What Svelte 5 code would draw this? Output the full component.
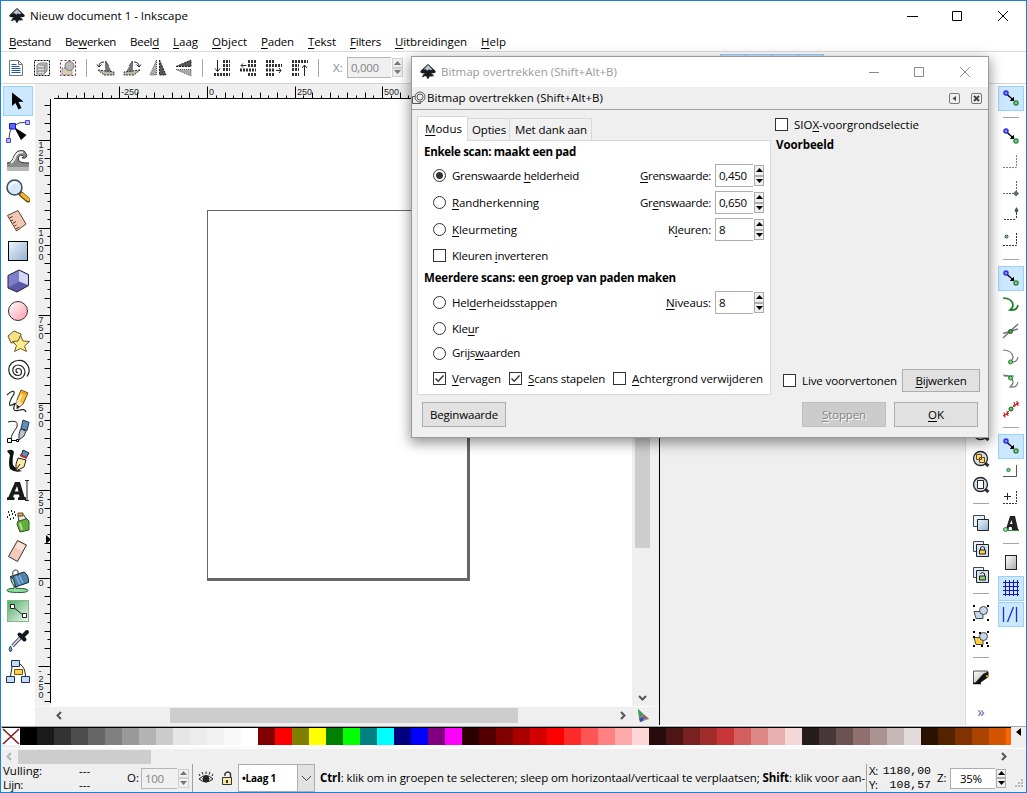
<script>
  function fit(node, width) {
    const natural = node.getBoundingClientRect().width;
    const count = node.textContent.length;
    node.style.letterSpacing = (width - natural) / count + 'px';
  }

  const menus = [
    ['', 'B', 'estand', 42], ['Be', 'w', 'erken', 51], ['Beel', 'd', '', 29], ['', 'L', 'aag', 25],
    ['', 'O', 'bject', 35], ['', 'P', 'aden', 33], ['', 'T', 'ekst', 28], ['', 'F', 'ilters', 31],
    ['', 'U', 'itbreidingen', 72], ['', 'H', 'elp', 25]
  ];
  const toolbar = ['doc', 'layers', 'deselect', '|', 'rotl', 'rotr', 'fliph', 'flipv', '|', 'bottom', 'lower', 'raise', 'top', '|'];
  const tools = ['arrow', 'node', 'tweak', 'zoom', 'measure', 'rect', 'box', 'circle', 'star', 'spiral',
    'pencil', 'pen', 'calli', 'text', 'spray', 'eraser', 'bucket', 'gradient', 'dropper', 'connector'];
  const snaps = [
    ['snap', 98, 1], ['|', 117], ['snap', 136], ['bbox', 162], ['bbox2', 188], ['bbox3', 214], ['bbox4', 240], ['|', 259],
    ['snap', 278, 1], ['path', 305], ['cross', 331], ['cusp', 357], ['smooth', 382], ['mid', 409], ['|', 427],
    ['snap', 446, 1], ['center', 471], ['plus', 498], ['textbase', 524], ['|', 543],
    ['page', 562], ['grid', 588, 1], ['guides', 614, 1]
  ];
  const commands = [
    ['zoompage', 433], ['zoomdraw', 459], ['zoomsheet', 485], ['|', 503], ['dup', 523], ['clone', 549], ['unclone', 575], ['|', 593],
    ['group', 613], ['ungroup', 639], ['|', 657], ['fill', 677]
  ];
  const gap = (list, i, start) => {
    const half = (e) => (e[0] === '|' ? 0.5 : 12.5);
    const top = list[i][1] - half(list[i]);
    return i ? top - (list[i - 1][1] + half(list[i - 1])) : top - start;
  };
  const colors = ('000000 1a1a1a 333333 4d4d4d 666666 808080 999999 b3b3b3 cccccc e6e6e6 ececec f2f2f2 f9f9f9 ffffff ' +
    '800000 ff0000 808000 ffff00 008000 00ff00 008080 00ffff 000080 0000ff 800080 ff00ff ' +
    '2b0000 550000 800000 aa0000 d40000 ff0000 ff2a2a ff5555 ff8080 ffaaaa ffd5d5 ' +
    '280b0b 501616 782121 a02c2c c83737 d35f5f de8787 e9afaf f4d7d7 ' +
    '241c1c 483737 6c5353 916f6f ac9393 c8b7b7 e3dbdb 2b1100 552200 803300 aa4400 d45500 ff6600').split(' ');

  const step = 8.757;
  const hTicks = Array.from({ length: 42 }, (_, k) => k - 17).map((k) => ({ k, x: Math.round(207 - 35 + k * step) }));
  const vTicks = Array.from({ length: 69 }, (_, k) => k - 14).map((k) => ({ k, y: Math.round(578 - 84 - k * step) }))
    .filter((t) => t.y > 17 && t.y < 619);
  const len = (k) => (k % 10 === 0 ? 12 : k % 2 === 0 ? 6 : 3);
</script>

{#snippet logo()}
  <svg class="logo" width="18" height="18" viewBox="0 0 18 18">
    <path d="M9 1 L16.5 8 Q17.5 9.6 15.5 10 L12 10.6 L14.5 11.8 L13 13.2 L10.6 13.4 L9.5 15.8 L8 15.6 L7.6 13.6 L4 13 L3.6 11.8 L6 10.8 L2.5 10 Q.5 9.6 1.5 8Z" fill="#17191c" />
    <path d="M9 2 L13.4 6.4 L11.4 7.3 L10 6.3 L8.4 7.8 L6.6 6.3 L4.6 6.6Z" fill="#b9c7d6" />
    <path d="M12 12.8h3M3 13.6h2" stroke="#333" />
  </svg>
{/snippet}

{#snippet spin(off)}
  <span class="spin" class:off>
    <i><svg width="7" height="4"><path d="M3.5 0L7 4H0Z" /></svg></i>
    <i><svg width="7" height="4"><path d="M0 0H7L3.5 4Z" /></svg></i>
  </span>
{/snippet}

{#snippet lines(d)}
  <path {d} stroke="#333" stroke-width="3" stroke-dasharray="2 1" fill="none" />
{/snippet}

{#snippet magnifier()}
  <path d="M16 16L19.500 19" stroke="#333" stroke-width="3" />
  <circle cx="11.5" cy="11.5" r="7" fill="#cfe0f2" stroke="#222" stroke-width="1.3" />
{/snippet}

{#snippet icon(n)}
  <svg class="ic" width="24" height="24" viewBox="0 0 24 24" fill="none" stroke-width="1">
    {#if n === 'doc'}
      <path d="M5.5 4.5h9l4 4v11h-13z" fill="#fff" stroke="#777" /><path d="M14.5 4.5v4h4" stroke="#777" />
      <path d="M7.5 8.5h5M7.5 10.5h8M7.5 12.5h9M7.5 14.5h9M7.5 16.5h9" stroke="#1e57a8" stroke-width="1.2" />
    {:else if n === 'layers'}
      <rect x="4.500" y="4.500" width="15" height="15" stroke="#000" stroke-dasharray="2 1" />
      <path d="M7 9l3-2h7v8l-3 3H7zM7 12h8M7 15h8M15 9v8M9 9h7" fill="#ddd" stroke="#777" />
    {:else if n === 'deselect'}
      <rect x="4.500" y="4.500" width="15" height="15" stroke="#802030" stroke-dasharray="2 2" />
      <path d="M6 12h6l4 2v5H6z" fill="#d9cfb0" stroke="#555" stroke-dasharray="1 1" /><circle cx="13.500" cy="10" r="4.500" fill="#bbb" stroke="#777" />
    {:else if n === 'rotl' || n === 'rotr'}
      <g transform={n === 'rotr' ? 'matrix(-1 0 0 1 24 0)' : ''}>
        <path d="M12 5v11l7 2z" fill="#777" /><path d="M4 14l16 2v3H10z" fill="#bbb7a5" stroke="#333" stroke-dasharray="2 1" />
        <path d="M12 16L11.500 5L15 10" stroke="#555" /><path d="M5 10.500Q5 6 10 6M3 8.500l2 2.500 2.500-2.500" stroke="#222" />
      </g>
    {:else if n === 'fliph' || n === 'flipv'}
      <g transform={n === 'flipv' ? 'rotate(-90 12 12)' : ''}>
        <path d="M10.500 4V19H4Z" fill="#aaa" stroke="#555" stroke-dasharray="1 1" /><path d="M13.500 4V19H20Z" fill="#555" stroke="#222" stroke-dasharray="2 1" />
      </g>
    {:else if n === 'bottom'}
      {@render lines('M13 5.500h7M13 9.500h7M13 13.500h7M4 18.500h16')}<path d="M7.500 4v11M5 12.500l2.500 3 2.500-3" stroke="#222" />
    {:else if n === 'lower'}
      {@render lines('M12 5.500h8M12 9.500h8M4 14h16M12 18.500h8')}<path d="M10.500 9.500h-5M7 7.500l-2 2 2 2" stroke="#222" />
    {:else if n === 'raise'}
      {@render lines('M4 5.500h9M4 9.500h16M4 14h9M4 18.500h9')}<path d="M14 14.500h5M17 12l2 2.500-2 2.500" stroke="#222" />
    {:else if n === 'top'}
      {@render lines('M4 5.500h16M4 9.500h7M4 13.500h7M4 18.500h7')}<path d="M16.500 20V9M14 12l2.500-3 2.500 3" stroke="#222" />
    {:else if n === 'arrow'}
      <path d="M6 3.500v13.500l3.500-3 3 6.500 3-1.500-3-6 5-.5z" fill="#000" />
    {:else if n === 'node'}
      <path d="M3 19Q3 3 21 3" stroke="#444" /><path d="M8 8l12.500 8-5.500 5z" fill="#000" />
      <path d="M3.500 4.500h6v5.500h-6z" fill="#5a66f5" stroke="#1018c8" /><path d="M19.500 1.500h4v4h-4zM.5 19.500h4v4h-4z" fill="#b8bcff" stroke="#4a4ad0" />
    {:else if n === 'tweak'}
      <path d="M1 14Q6 14 8 7Q11 0 18 2Q20 4 21 7Q20 10 16 9Q19 7 16 6Q12 6 12.500 11Q13 14 23 14V22H1Z" fill="#8a8a8a" />
      <path d="M1 14Q6 14 8 7Q11 0 18 2Q20 4 21 7Q20 10 16 9Q19 7 16 6Q12 6 12.500 11Q13 14 23 14" stroke="#333" /><path d="M5 14Q8 12 9.500 7Q12 2.500 17 3.500" stroke="#eee" stroke-width="2" />
      <path d="M1 18h22v4H1z" fill="#b8b8b8" />
    {:else if n === 'zoom'}
      <path d="M15 15l7 6" stroke="#6e4c10" stroke-width="5" stroke-linecap="round" /><path d="M16 15.500l6 5" stroke="#f5b630" stroke-width="3.200" stroke-linecap="round" />
      <circle cx="8.500" cy="8.500" r="7.500" fill="#d7e8f7" stroke="#3a4a5e" stroke-width="1.500" /><path d="M4 9a5 5 0 0 1 7-5" stroke="#fff" stroke-width="1.500" />
    {:else if n === 'measure'}
      <path d="M1.500 6.500L12 1.500l8 13.500L10.500 22Z" fill="#f0c9b4" stroke="#6b4034" /><path d="M3.500 9l3-1.500M5 12l2-1M6.800 14.500l3.200-2M8.500 17l2-1M10 20l3.200-2" stroke="#5b3025" />
    {:else if n === 'rect'}
      <rect x="2.500" y="2.500" width="19" height="19" fill="url(#gBlue)" stroke="#000" />
    {:else if n === 'box'}
      <path d="M2 6.500L13 1l9.500 4.500v11L11 23l-9-4z" fill="#7f7fc8" /><path d="M13 1.500v11l9 3.500V6z" fill="#d5d8f6" /><path d="M2.500 18.500L13 12.500l9.500 4L11 23z" fill="#5a5aa6" />
      <path d="M2 6.500L13 1l9.500 4.500v11L11 23l-9-4z" stroke="#222238" />
    {:else if n === 'circle'}
      <circle cx="12" cy="12" r="9.500" fill="url(#gPink)" stroke="#333" />
    {:else if n === 'star'}
      <path d="M2 7l6-5 7 3-1 8-9 1z" fill="#f7e28a" stroke="#6b5a20" /><path d="M14.500 6.500l2.500 5.500 6.500.5-5 4.500 2 5.500-6-3-6 3 2-6-4-4 5.500-.5z" fill="#fdec8e" stroke="#6b5a20" />
    {:else if n === 'spiral'}
      <path d="M12 13.500a1.500 1.500 0 0 1 0-4a3.500 3.500 0 0 1 0 7a5.200 5.200 0 0 1 0-10.500a7 7 0 0 1 0 14a9 9 0 0 1 0-18.500a10 10 0 0 1 9 16" stroke="#222" stroke-width="1.200" />
    {:else if n === 'pencil'}
      <path d="M1 6Q9 -1 8 5Q2 14 4 16.500Q7 16 9.500 14Q5 23 12 21.500Q19 19 20 23" stroke="#222" stroke-width="1.200" />
      <path d="M15 1l7 3-5 11-6 5 0-9z" fill="#f6c23a" stroke="#6a4a10" /><path d="M15.500 1.500l6 3-1 2-6-3z" fill="#f49a2a" /><path d="M15.500 6l-3 6" stroke="#fff2b0" stroke-width="2" /><path d="M11 11l5.500 3.500L11 20z" fill="#f9e6c0" /><path d="M11 16l3 1.500-3 2.500z" fill="#222" />
    {:else if n === 'pen'}
      <path d="M2 3Q13 0 11 8Q5 16 5 20" stroke="#222" /><path d="M17 1l6 2.500-2 8-6-2z" fill="#5e8fbf" stroke="#1c3450" /><path d="M14.500 10l5.500 2-2 5-5 4 0-6z" fill="#b9c6d2" stroke="#333" />
      <path d="M5 21.500h6" stroke="#000" /><path d="M1.500 19.500h4v4h-4zM10.500 20.500h2v2h-2z" fill="#fff" stroke="#000" />
    {:else if n === 'calli'}
      <path d="M1 2Q6 -1 8 3Q6 10 7 16Q10 20 16 22Q9 24 4 20Q2 15 4 6Z" fill="#111" /><path d="M17 1l6 3-3 5-5-2z" fill="#5e8fbf" stroke="#222" /><path d="M14 6l7 3" stroke="#c03030" stroke-width="2" />
      <path d="M12 9l8 2-2 7-8 4 0-7z" fill="#ffe9a8" stroke="#222" /><path d="M10 21l4-6" stroke="#222" />
    {:else if n === 'text'}
      <path d="M1 21v-2.500l1.500-.5L9 3h5l4.500 15 1.500.5V21h-8v-2.500l1.500-.5-.5-2.500H8L7 18l1.500.5V21zM8.800 12.500h3.700l-1.500-5.500z" fill="#1a1a1a" fill-rule="evenodd" /><path d="M19 1.500h4M19 21.500h4M21 1.500v20" stroke="#222" />
    {:else if n === 'spray'}
      <path d="M2 3h1M5 2h1M8 3h1M3 6h1M6 5h1M9 6h1M4 10h1M7 9h1M1 8h1" stroke="#222" stroke-width="2" />
      <path d="M12 12q3-4 8-3l3 3v9l-9 2-3-8z" fill="#5fae3c" stroke="#2b5a18" /><path d="M12 7l6-1 2 4-7 2z" fill="#eaf2e2" stroke="#444" /><path d="M12 4h5v3h-5z" fill="#d8a858" stroke="#6a4a20" /><path d="M14 14l2 7" stroke="#b5e08e" stroke-width="2" />
    {:else if n === 'eraser'}
      <path d="M11.500 1.500l9 4.500-9 16.500-9-5z" fill="#f5cbbb" stroke="#333" /><path d="M12 3l7 4-3 5-7-4z" fill="#fbe3da" />
    {:else if n === 'bucket'}
      <path d="M1 21.500q0-2 7-2.200v-4h2v4q12 0 12 2.200t-10.500 2T1 21.500z" fill="#8edc9c" stroke="#245a34" /><path d="M4.500 7.500L18 3q5 3 4.500 10.500L9.500 18z" fill="#4f83ad" stroke="#14283c" /><path d="M10 7l4 8.500M13 6l4 8" stroke="#8db8d8" stroke-width="1.500" />
      <path d="M8 9Q5 2 9 1T12 7" stroke="#333" /><path d="M4.500 7.500q4 2 5 10.500-4-2-5-10.500z" fill="#a4dcae" stroke="#14283c" />
    {:else if n === 'gradient'}
      <rect x="1.500" y="1.500" width="21" height="21" fill="url(#gGreen)" stroke="#7fb98a" /><path d="M6 7l12 10" stroke="#222" /><path d="M4.500 5.500h4v4h-4zM16.500 14.500h4v4h-4z" fill="#fff" stroke="#222" />
    {:else if n === 'dropper'}
      <path d="M16 7L6.500 17" stroke="#445" stroke-width="3.400" /><path d="M14.500 8.500l-8 8.500" stroke="#cfe0f0" stroke-width="1.800" /><path d="M13.500 5.500l5 5M17 7l4-4" stroke="#14181e" stroke-width="4" stroke-linecap="round" />
      <path d="M4.500 17q-3 4 0 6 3-2 0-6z" fill="#6f9ccc" stroke="#2c4a6c" />
    {:else if n === 'connector'}
      <path d="M4.500 17L6 8M14 5q5 3 5.500 12" stroke="#222" /><path d="M5.500 1.500h8v6h-8zM.5 17.500h8v6h-8zM15.500 17.500h8v6h-8z" fill="#c6dcf2" stroke="#16324e" /><path d="M8.500 10.500h8v5h-8z" fill="#ffd24a" stroke="#7a5200" />
    {:else if n === 'snap'}
      <path d="M8 8.500l7 6" stroke="#000" stroke-width="1.400" /><path d="M14.500 11.500v3h-3z" fill="#000" stroke="#000" />
      <circle cx="7" cy="7" r="2" fill="#8a8aff" stroke="#3030e0" stroke-width="1.500" /><circle cx="17" cy="17" r="2" fill="#8fc79c" stroke="#2b8a3c" stroke-width="1.500" />
    {:else if n === 'bbox' || n === 'bbox2'}
      <path d="M4 17.500h13.500V4" stroke={n === 'bbox' ? '#6d8a6d' : '#667'} stroke-dasharray="2 1" />
      {#if n === 'bbox2'}<path d="M17 14.500l3 3-3 3-3-3z" fill="#5b705f" />{/if}
    {:else if n === 'bbox3'}
      <path d="M5 17.500h11M17.500 8v9" stroke="#333" stroke-dasharray="2 1" /><path d="M17.500 5l2 3.500-2 3-2-3z" fill="#3f5a44" />
    {:else if n === 'bbox4'}
      <path d="M4 17.500h13.500V5" stroke="#333" stroke-dasharray="2 1" /><circle cx="7.500" cy="8.500" r="1.500" fill="#8fc79c" stroke="#2d4a32" />
    {:else if n === 'path'}
      <path d="M4 5Q13 5 14 12Q14 15 11 17Q18 18 19 12" stroke="#1e7e24" stroke-width="1.700" />
    {:else if n === 'cross'}
      <path d="M4 19L19 5M4 14.500L19 10" stroke="#777" stroke-width="1.500" /><circle cx="11.500" cy="12.500" r="2" fill="#4b9e50" stroke="#1c5c22" />
    {:else if n === 'cusp' || n === 'smooth'}
      <path d="M4 5Q13 5 14 12Q14 15 11 17Q18 18 19 12" stroke="#777" stroke-width="1.200" /><circle cx="11.500" cy={n === 'cusp' ? 17 : 8} r="2" fill="#86d08c" stroke="#1e7e24" />
      {#if n === 'smooth'}<path d="M5 6h10" stroke="#1e7e24" />{/if}
    {:else if n === 'mid'}
      <path d="M5 19L19 5" stroke="#555" /><path d="M5 15.500l1 5M8 14l1 5M4 19l6-3M15 5l1 5M18 4l1 5M14 9l6-3" stroke="#cc2222" stroke-width="1.200" /><circle cx="12" cy="12" r="2" fill="#6cc070" stroke="#145a1a" />
    {:else if n === 'center'}
      <path d="M4 17.500h13.500V6" stroke="#555" /><circle cx="9.500" cy="11" r="1.700" fill="#8fc79c" stroke="#2b8a3c" />
    {:else if n === 'plus'}
      <path d="M5 10.500h7M8.500 7v7" stroke="#222" /><path d="M4 17.500h13.500V5" stroke="#333" stroke-dasharray="2 1" />
    {:else if n === 'textbase'}
      <path d="M5 18l2-1 4-13h5l3 13 1 1v1h-7v-2l-.5-2H10l-.5 3zM11 12h2.500l-1-4z" fill="#222" fill-rule="evenodd" /><path d="M6 18.500h14" stroke="#2b8a3c" /><circle cx="6.500" cy="17.500" r="2" fill="#9fd7a8" stroke="#2b8a3c" />
    {:else if n === 'page'}
      <rect x="6.500" y="5.500" width="11" height="14" fill="url(#gGray)" stroke="#222" />
    {:else if n === 'grid'}
      <path d="M4 6.500h16M4 10.500h16M4 14.500h16M4 18.500h16M6.500 4v16M10.500 4v16M14.500 4v16M18.500 4v16" stroke="#1414c8" />
    {:else if n === 'guides'}
      <path d="M4.500 5v15M17.500 5v15M8.500 20L14.500 5" stroke="#1a32d0" stroke-width="1.300" />
    {:else if n === 'zoompage'}
      {@render magnifier()}
    {:else if n === 'zoomdraw'}
      {@render magnifier()}<path d="M7.500 7.500h5v5h-5zM10.500 10.500h5v5h-5z" fill="#ffd77a" stroke="#6b4a00" />
    {:else if n === 'zoomsheet'}
      {@render magnifier()}<path d="M8.500 7.500h6v8h-6z" fill="#fff" stroke="#222" />
    {:else if n === 'dup'}
      <path d="M4.500 4.500h11v11h-11z" fill="#e8f0f8" stroke="#39485a" /><path d="M8.500 8.500h11v11h-11z" fill="url(#gBlue)" stroke="#222" />
    {:else if n === 'clone' || n === 'unclone'}
      <path d="M4.500 4.500h10v10h-10z" fill="#e8f0f8" stroke="#39485a" /><path d="M7.500 7.500h12v12h-12z" fill="#d3e2f0" stroke="#222" />
      <path d={n === 'clone' ? 'M11.500 13v-2.500q2-2 4 0V13' : 'M11.500 11v-.5q2-2 4 0V13'} stroke="#222" /><path d="M10.500 13h6v4h-6z" fill={n === 'clone' ? '#ffcf40' : '#8ccc6c'} stroke="#222" />
    {:else if n === 'group' || n === 'ungroup'}
      <path d="M5 10.500h9v7H7z" fill={n === 'group' ? '#c4d8ea' : '#ffcf40'} stroke="#444" /><circle cx="14.500" cy="9.500" r="4" fill="#c4d8ea" stroke="#444" />
      <path d="M4 4h2v2H4zM18 4h2v2h-2zM4 18h2v2H4zM18 18h2v2h-2z" fill="#000" />
      {#if n === 'ungroup'}<path d="M10 5h2v2h-2zM17 15h2v2h-2zM4 9h2v2H4zM12 18h2v2h-2z" fill="#000" />{/if}
    {:else if n === 'fill'}
      <path d="M4.500 6h14v4l-8 8h-6z" fill="url(#gGray)" stroke="#555" /><path d="M19.500 6.500L14 9 6 18h5l8.500-6z" fill="#111" /><path d="M4 18.500h8" stroke="#111" stroke-width="1.500" /><path d="M17 10.500l2.500 1.500" stroke="#e6a020" stroke-width="2" />
    {/if}
  </svg>
{/snippet}

{#snippet lab(a, u, b, w)}<span class="t" use:fit={w}>{a}<u>{u}</u>{b}</span>{/snippet}

{#snippet check(on)}
  <span class="check">{#if on}<svg width="11" height="11"><path d="M1.500 5.500l2.700 2.700L9.500 2.500" fill="none" stroke="#333" stroke-width="1.400" /></svg>{/if}</span>
{/snippet}

{#snippet field(v)}
  <span class="field"><span class="entry">{v}</span>{@render spin(false)}</span>
{/snippet}

<svg class="defs" width="0" height="0">
  <linearGradient id="gBlue" x2="1" y2="1"><stop stop-color="#f0f6fc" /><stop offset="1" stop-color="#8fb0d0" /></linearGradient>
  <linearGradient id="gPink" x2="1" y2="1"><stop stop-color="#fff" /><stop offset="1" stop-color="#ff9aa8" /></linearGradient>
  <linearGradient id="gGreen" x2="1" y2="1"><stop stop-color="#4ea864" /><stop offset="1" stop-color="#f2faf3" /></linearGradient>
  <linearGradient id="gGray" x2="1" y2="1"><stop stop-color="#fff" /><stop offset="1" stop-color="#aaa" /></linearGradient>
</svg>

<div class="app">
  <header class="title">
    {@render logo()}
    <span class="t" use:fit={158}>Nieuw document 1 - Inkscape</span>
    <svg class="caption" width="104" height="12" fill="none" stroke="#000">
      <path d="M0 6.500h11M45.500 1.500h9v9h-9zM91 1l10 10M101 1L91 11" />
    </svg>
  </header>

  <nav class="menu">
    {#each menus as m}{@render lab(m[0], m[1], m[2], m[3])}{/each}
  </nav>

  <div class="toolbar">
    {#each toolbar as n}
      {#if n === '|'}<span class="vsep"></span>{:else}<span class="tb">{@render icon(n)}</span>{/if}
    {/each}
    <span class="xlab">X:</span>
    <span class="field off"><span class="entry">0,000</span>{@render spin(true)}</span>
    <span class="modes"><i></i><i></i><i></i><i></i></span>
  </div>

  <main>
    <aside class="tools">
      {#each tools as n, i}<span class="tool" class:on={i === 0}>{@render icon(n)}</span>{/each}
    </aside>

    <section class="work">
      <svg class="hruler" width="600" height="15">
        <path d="M19 14.500h581" stroke="#000" />
        {#each hTicks as t}
          <path d="M{t.x + 0.5} 14.500v{-len(t.k)}" stroke="#000" />
          {#if t.k % 10 === 0}<text x={t.x + 2} y="11">{t.k * 25}</text>{/if}
        {/each}
      </svg>
      <div class="mid">
        <svg class="vruler" width="16" height="608" viewBox="0 15 16 608">
          <path d="M15.500 15v604" stroke="#000" />
          {#each vTicks as t}
            <path d="M15.500 {t.y + 0.5}h{-len(t.k)}" stroke="#000" />
            {#if t.k % 10 === 0}
              {#each String(t.k * 25) as ch, j}<text x="3.500" y={t.y + 8 + j * 8}>{ch}</text>{/each}
            {/if}
          {/each}
          <path d="M11 451v9l5-4.500z" fill="#000" />
        </svg>
        <div class="canvas"><div class="sheet"></div></div>
        <div class="vscroll"><span class="thumb"></span><svg width="9" height="6"><path d="M1 1l3.500 3.500L8 1" /></svg></div>
      </div>
      <div class="hscroll">
        <svg width="6" height="9"><path d="M5 1L1.500 4.500 5 8" /></svg>
        <span class="thumb"></span>
        <svg width="6" height="9"><path d="M1 1l3.500 3.500L1 8" /></svg>
        <svg class="cms" width="14" height="14"><path d="M2 0L13 10L4 13Z" /><path d="M2 0L7 5L3 9Z" /><path d="M7 5L13 10L8 9Z" /><path d="M3 9L8 8L7 12L4 13Z" /></svg>
      </div>
    </section>

    <section class="dock"></section>

    <aside class="commands">
      {#each commands as c, i}
        <span class:hsep={c[0] === '|'} class="cell" style="margin-top:{gap(commands, i, 84)}px">{#if c[0] !== '|'}{@render icon(c[0])}{/if}</span>
      {/each}
      <span class="more">»</span>
    </aside>
    <aside class="snaps">
      {#each snaps as c, i}
        <span class:hsep={c[0] === '|'} class:on={c[2]} class="cell" style="margin-top:{gap(snaps, i, 84)}px">{#if c[0] !== '|'}{@render icon(c[0])}{/if}</span>
      {/each}
    </aside>
  </main>

  <div class="palette">
    <svg class="none" width="18" height="17"><path d="M0 0h18v17H0z" fill="#fff" /><path d="M1 1l16 15M17 1L1 16" stroke="#801818" stroke-width="1.500" /></svg>
    <div class="swatches">{#each colors as c}<i style="background:#{c}"></i>{/each}</div>
    <svg class="tri" width="5" height="8"><path d="M5 0v8L0 4z" /></svg>
  </div>
  <div class="pscroll">
    <svg width="6" height="9"><path d="M5 1L1.500 4.500 5 8" class="faint" /></svg>
    <span class="thumb"></span>
    <svg class="r" width="6" height="9"><path d="M1 1l3.500 3.500L1 8" /></svg>
  </div>

  <footer>
    <div class="paint"><span class="t" use:fit={39}>Vulling:</span><span>---</span><span class="t" use:fit={20}>Lijn:</span><span>---</span></div>
    <span class="o">O:</span>
    <span class="field off op"><span class="entry">100</span>{@render spin(true)}</span>
    <span class="fsep"></span>
    <svg class="eye" width="16" height="14" fill="none" stroke="#222"><path d="M1 8Q8 1 15 8Q8 14 1 8Z" fill="#ddd" /><circle cx="8" cy="8" r="3" fill="#222" /><path d="M2 5L1 3M5 3.500L4 1M8 3V.5M11 3.500L12 1M14 5l1-2" /></svg>
    <svg class="lock" width="12" height="15" fill="none" stroke="#333"><path d="M4 5V2.500Q7-.5 9.500 2.500V7" stroke-width="1.400" /><path d="M1.500 6.500h9v7h-9z" fill="#f7e9a0" /><path d="M6 9v3" stroke-width="2" /></svg>
    <div class="combo"><b>•Laag 1</b><i><svg width="11" height="7"><path d="M1 1l4.500 4.500L10 1" fill="none" stroke="#444" /></svg></i></div>
    <span class="t hint" use:fit={545}><b>Ctrl</b>: klik om in groepen te selecteren; sleep om horizontaal/verticaal te verplaatsen; <b>Shift</b>: klik voor aan-</span>
    <span class="fsep last"></span>
    <div class="coords"><span>X:</span><tt>1180,00</tt><span>Y:</span><tt>108,57</tt></div>
    <span class="z">Z:</span>
    <span class="field zoomf"><span class="entry">35%</span>{@render spin(false)}</span>
    <svg class="grip" width="9" height="9" fill="#b8b8b8"><path d="M6 0h2v2H6zM3 3h2v2H3zM6 3h2v2H6zM0 6h2v2H0zM3 6h2v2H3zM6 6h2v2H6z" /></svg>
  </footer>

  <div class="dialog">
    <div class="dtitle">
      {@render logo()}
      <span class="t" use:fit={176}>Bitmap overtrekken (Shift+Alt+B)</span>
      <svg class="dcap" width="104" height="12" fill="none" stroke="#888"><path d="M0 6.500h10M45.500 1.500h9v9h-9zM91 1l10 10M101 1L91 11" /></svg>
    </div>
    <div class="dhead">
      <svg width="14" height="14" fill="#eee" stroke="#555"><path d="M.5 5.500h8v7h-8z" /><circle cx="8" cy="6" r="5" /><circle cx="8" cy="6" r="3" /></svg>
      <span class="t" use:fit={176}>Bitmap overtrekken (Shift+Alt+B)</span>
      <svg class="hb" width="34" height="11" fill="none" stroke="#777"><rect x=".5" y=".5" width="10" height="10" rx="1.500" /><path d="M7 3v5L3.500 5.500z" fill="#444" stroke="none" /><rect x="22.500" y=".5" width="10" height="10" rx="1.500" /><path d="M25 3l5 5M30 3l-5 5" stroke="#444" stroke-width="2" /></svg>
    </div>
    <div class="dbody">
      <div class="left">
        <div class="tabs">
          <span class="tab act">{@render lab('', 'M', 'odus', 37)}</span>
          <span class="tab two"><span class="t" use:fit={34}>Opties</span></span>
          <span class="tab three"><span class="t" use:fit={72}>Met dank aan</span></span>
        </div>
        <div class="pane">
          <div class="row h" style="height:21px"><b class="t" use:fit={152}>Enkele scan: maakt een pad</b></div>
          <div class="row" style="height:27px"><span class="radio sel"></span>{@render lab('Grenswaarde ', 'h', 'elderheid', 127)}<span class="end">{@render lab('', 'G', 'renswaarde:', 71)}{@render field('0,450')}</span></div>
          <div class="row" style="height:27px"><span class="radio"></span>{@render lab('', 'R', 'andherkenning', 87)}<span class="end">{@render lab('Gr', 'e', 'nswaarde:', 71)}{@render field('0,650')}</span></div>
          <div class="row" style="height:27px"><span class="radio"></span>{@render lab('', 'K', 'leurmeting', 65)}<span class="end">{@render lab('K', 'l', 'euren:', 43)}{@render field('8')}</span></div>
          <div class="row" style="height:25px">{@render check(false)}{@render lab('Kleuren ', 'i', 'nverteren', 96)}</div>
          <div class="row h" style="height:20px"><b class="t" use:fit={252}>Meerdere scans: een groep van paden maken</b></div>
          <div class="row" style="height:29px"><span class="radio"></span>{@render lab('Hel', 'd', 'erheidsstappen', 105)}<span class="end">{@render lab('', 'N', 'iveaus:', 45)}{@render field('8')}</span></div>
          <div class="row" style="height:23px"><span class="radio"></span>{@render lab('Kle', 'u', 'r', 27)}</div>
          <div class="row" style="height:26px"><span class="radio"></span>{@render lab('Grijs', 'w', 'aarden', 68)}</div>
          <div class="row checks" style="height:25px">{@render check(true)}{@render lab('', 'V', 'ervagen', 49)}{@render check(true)}{@render lab('', 'S', 'cans stapelen', 77)}{@render check(false)}{@render lab('', 'A', 'chtergrond verwijderen', 131)}</div>
        </div>
      </div>
      <div class="right">
        <div class="siox">{@render check(false)}{@render lab('SIO', 'X', '-voorgrondselectie', 125)}</div>
        <b class="t vb" use:fit={58}>Voorbeeld</b>
        <div class="live">{@render check(false)}<span class="t" use:fit={95}>Live voorvertonen</span><span class="btn upd">{@render lab('', 'B', 'ijwerken', 51)}</span></div>
      </div>
    </div>
    <div class="dfoot">
      <span class="btn"><span class="t" use:fit={68}>Beginwaarde</span></span>
      <span class="btn dis">{@render lab('', 'S', 'toppen', 44)}</span>
      <span class="btn">{@render lab('', 'O', 'K', 16)}</span>
    </div>
  </div>
</div>

<style>
  :global(body) { background: #fff; overflow: hidden; }
  .app, .app * { box-sizing: border-box; }
  .defs { position: absolute; }
  .app { position: relative; width: 1027px; height: 793px; border: 1px solid #1b80d4; background: #fff; color: #000; display: flex; flex-direction: column; overflow: hidden; font: 11.5px/16px "Open Sans", "Noto Sans", sans-serif; white-space: nowrap; }
  svg { display: block; flex: none; }
  u { text-decoration: underline; text-decoration-thickness: 1px; text-underline-offset: 2px; }
  .t { flex: none; white-space: pre; }
  i { font-style: normal; }

  .title { height: 30px; flex: none; display: flex; align-items: center; padding-left: 7px; gap: 4px; }
  .caption { margin-left: auto; margin-right: 15px; }
  .menu { height: 21px; flex: none; display: flex; align-items: center; gap: 14px; padding: 2px 0 0 8px; border-bottom: 1px solid #dadada; }
  .toolbar { height: 32px; flex: none; display: flex; align-items: center; padding-left: 2px; border-bottom: 1px solid #d5d5d5; }
  .tb { width: 26px; display: flex; justify-content: center; }
  .vsep { width: 1px; height: 18px; margin: 0 6px 0 5px; background: #a8a8a8; }
  .xlab { color: #888; margin-left: 8px; width: 14px; }
  .modes { display: flex; align-self: flex-start; margin: 2px 0 0 317px; }
  .modes i { width: 26px; height: 25px; background: #cce8ff; border: 1px solid #99d1ff; }

  .field { display: flex; height: 23px; align-items: center; flex: none; }
  .entry { width: 38px; height: 23px; border: 1px solid #abadb3; border-right: 0; background: #fff; padding: 2px 0 0 3px; line-height: 17px; letter-spacing: -.3px; }
  .spin { width: 10px; height: 21px; display: flex; flex-direction: column; margin-left: 1px; }
  .spin i { flex: 1; border: 1px solid #acacac; background: #f0f0f0; display: flex; align-items: center; justify-content: center; }
  .spin.off i { border-color: #d0d0d0; }
  .spin.off svg { fill: #777; }
  .off .entry { background: #f0f0f0; color: #838383; width: 44px; height: 21px; border-color: #b5b5b5; padding-top: 1px; }
  .off .spin { height: 19px; width: 11px; }

  main { height: 642px; flex: none; display: flex; }
  .tools { width: 34px; padding: 2px 0 0 2px; display: flex; flex-direction: column; background: #fff; }
  .tool { width: 30px; height: 30px; flex: none; display: flex; align-items: center; justify-content: center; }
  .tool.on { background: #cce8ff; border: 1px solid #99d1ff; }
  .work { width: 624px; background: #efefef; display: flex; flex-direction: column; }
  text { font: 9px "Liberation Sans", sans-serif; fill: #222; }
  .mid { display: flex; height: 607px; overflow: hidden; flex: none; }
  .canvas { width: 581px; height: 607px; background: #fff; position: relative; }
  .sheet { position: absolute; left: 156px; top: 111px; width: 261px; height: 369px; border: 1px solid #666; box-shadow: 1px 1px 0 1px #666, 1px 1px 0 1px #666; clip-path: inset(0 -2px -2px 0); }
  .vscroll { width: 18px; padding-left: 3px; display: flex; flex-direction: column; align-items: flex-start; }
  .vscroll .thumb { width: 15px; height: 449px; background: #cdcdcd; flex: none; }
  .vscroll svg { margin: 147px 0 0 3px; }
  .vscroll path, .hscroll path, .pscroll path { fill: none; stroke: #555; stroke-width: 2; }
  .pscroll path.faint { stroke: #b5b5b5; }
  .hscroll { height: 18px; display: flex; align-items: center; padding-left: 21px; border-top: 1px solid #fbfbfb; }
  .hscroll .thumb { width: 348px; height: 15px; background: #cdcdcd; margin: 0 102px 0 108px; }
  .hscroll .cms { margin-left: 10px; }
  .hscroll .cms path { stroke: none; }
  .hscroll .cms path:nth-child(1) { fill: #7a9a80; }
  .hscroll .cms path:nth-child(2) { fill: #3c9a4c; }
  .hscroll .cms path:nth-child(3) { fill: #b04858; }
  .hscroll .cms path:nth-child(4) { fill: #4048b8; }
  .dock { width: 307px; background: #efefef; border-left: 1px solid #000; border-right: 1px solid #dcdcdc; height: 641px; }
  .commands, .snaps { display: flex; flex-direction: column; align-items: center; width: 30px; }
  .cell { width: 26px; height: 25px; flex: none; display: flex; align-items: center; justify-content: center; }
  .cell.hsep { width: 16px; height: 1px; background: #a5a5a5; }
  .cell.on { background: #cce8ff; border: 1px solid #99d1ff; }
  .more { color: #6464b4; margin-top: 13px; font-size: 15px; }

  .palette { height: 22px; flex: none; display: flex; background: linear-gradient(#a9a9a9 1px, #efefef 1px); padding: 1px 0 0 1px; }
  .palette .none { margin-top: 1px; box-shadow: 0 -1px #000; }
  .swatches { width: 991px; display: flex; height: 21px; overflow: hidden; border-top: 1px solid #000; background: #fff; border-bottom: 1px solid #f8f8f8; }
  .swatches i { width: 17px; height: 17px; flex: none; }
  .tri { margin: 1px 0 0 5px; }
  .pscroll { height: 16px; flex: none; background: #efefef; display: flex; align-items: center; padding: 0 19px 0 5px; border-top: 1px solid #fff; }
  .pscroll .thumb { width: 133px; height: 14px; background: #cdcdcd; margin-left: 6px; }
  .pscroll .r { margin-left: auto; }

  footer { flex: 1; background: #efefef; display: flex; align-items: center; }
  .paint { width: 126px; padding-left: 2px; display: grid; grid-template-columns: 76px 1fr; line-height: 14px; justify-items: start; }
  .o { width: 14px; }
  .op .entry { width: 36px; }
  .fsep { width: 1px; height: 28px; background: #a0a0a0; margin-left: 3px; flex: none; }
  .eye { margin-left: 5px; }
  .lock { margin-left: 7px; }
  .combo { width: 77px; height: 28px; margin-left: 5px; border: 1px solid #acacac; background: #fff; display: flex; align-items: center; padding-left: 3px; flex: none; }
  .combo b { font-size: 10px; letter-spacing: -.2px; flex: 1; }
  .combo i { width: 17px; height: 26px; background: #e2e2e2; border-left: 1px solid #acacac; display: flex; align-items: center; justify-content: center; }
  .hint { margin-left: 5px; }
  .fsep.last { margin-left: 1px; }
  .coords { width: 68px; padding-left: 2px; display: grid; grid-template-columns: 12px 50px; line-height: 14px; flex: none; }
  .coords span { letter-spacing: -.5px; }
  .coords tt { font: 11.500px/14px "Liberation Mono", monospace; text-align: right; }
  .z { width: 13px; margin-left: 2px; flex: none; }
  .zoomf .entry { width: 45px; padding-left: 9px; height: 21px; padding-top: 1px; }
  .zoomf .spin { height: 19px; }
  .grip { align-self: flex-end; margin: 0 0 4px 9px; }

  .dialog { position: absolute; left: 410px; top: 55px; width: 578px; height: 382px; background: #efefef; border: 1px solid #9a9a9a; box-shadow: 0 4px 12px 1px rgba(0, 0, 0, .42); display: flex; flex-direction: column; }
  .dtitle { height: 30px; background: #fff; display: flex; align-items: center; color: #999; padding-left: 7px; gap: 4px; flex: none; }
  .dcap { margin-left: auto; margin-right: 15px; }
  .dhead { height: 23px; flex: none; border-bottom: 1px solid #a0a0a0; display: flex; align-items: center; gap: 1px; }
  .hb { margin-left: auto; margin-right: 5px; }
  .dbody { height: 285px; display: flex; padding: 6px 0 0 5px; flex: none; }
  .left { width: 354px; flex: none; }
  .tabs { height: 24px; display: flex; align-items: flex-end; }
  .tab { border: 1px solid #d9d9d9; border-bottom: 0; height: 22px; display: flex; align-items: center; justify-content: center; padding: 1px 0 0 1px; background: #f0f0f0; }
  .tab.act { width: 51px; height: 25px; margin-bottom: -1px; background: #fff; position: relative; padding: 0 0 0 2px; }
  .tab.two { width: 42px; border-left: 0; }
  .tab.three { width: 82px; border-left: 0; }
  .pane { border: 1px solid #d9d9d9; background: #fff; height: 255px; }
  .row { display: flex; align-items: center; padding: 0 5px 0 15px; }
  .row.h { padding-left: 6px; }
  .row > .t { margin-left: 6px; }
  .row.h > .t { margin-left: 0; }
  .end { margin-left: auto; display: flex; align-items: center; margin-right: 1px; }
  .end .field { margin-left: 4px; }
  .radio { width: 13px; height: 13px; border: 1px solid #333; border-radius: 50%; background: #fff; flex: none; }
  .radio.sel { background: radial-gradient(circle, #333 0 3px, #fff 4px); }
  .check { width: 13px; height: 13px; border: 1px solid #333; background: #fff; flex: none; }
  .checks > .t + .check { margin-left: 8px; }
  .right { flex: 1; padding: 0 7px 0 4px; display: flex; flex-direction: column; align-items: flex-start; }
  .siox { display: flex; align-items: center; gap: 6px; height: 17px; }
  .vb { margin: 4px 0 0 1px; }
  .live { display: flex; align-items: center; gap: 6px; margin: 216px 0 0 8px; }
  .btn { display: flex; align-items: center; justify-content: center; background: #e1e1e1; border: 1px solid #adadad; width: 84px; height: 25px; }
  .upd { width: 78px; height: 23px; margin-left: -1px; }
  .dfoot { display: flex; gap: 8px; padding: 7px 10px 0; }
  .btn.dis { margin-left: auto; background: #ccc; border-color: #bfbfbf; color: #838383; text-shadow: 1px 1px #fff; }
</style>
